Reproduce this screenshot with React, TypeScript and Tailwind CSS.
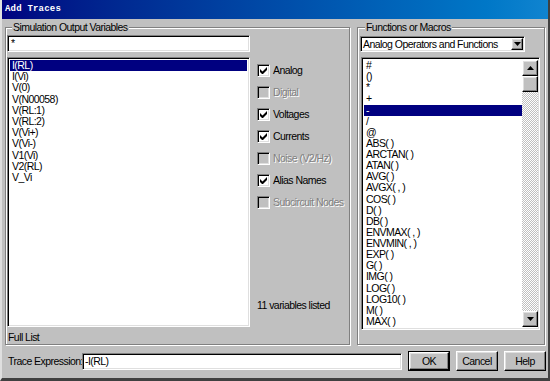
import React from "react";

const VARS = ["I(RL)", "I(Vi)", "V(0)", "V(N00058)", "V(RL:1)", "V(RL:2)", "V(Vi+)", "V(Vi-)", "V1(Vi)", "V2(RL)", "V_Vi"];

const FUNCS = [
  "#", "()", "*", "+", "-", "/", "@", "ABS( )", "ARCTAN( )", "ATAN( )", "AVG( )", "AVGX( , )", "COS( )",
  "D( )", "DB( )", "ENVMAX( , )", "ENVMIN( , )", "EXP( )", "G( )", "IMG( )", "LOG( )", "LOG10( )", "M( )", "MAX( )",
];

const OPTIONS = [
  { label: "Analog", checked: true, disabled: false },
  { label: "Digital", checked: false, disabled: true },
  { label: "Voltages", checked: true, disabled: false },
  { label: "Currents", checked: true, disabled: false },
  { label: "Noise (V2/Hz)", checked: false, disabled: true },
  { label: "Alias Names", checked: true, disabled: false },
  { label: "Subcircuit Nodes", checked: false, disabled: true },
];

// classic win32 bevels
const SUNKEN = "border border-t-[#808080] border-l-[#808080] border-b-white border-r-white shadow-[inset_1px_1px_0_#000,inset_-1px_-1px_0_#dfdfdf]";
const RAISED = "border border-t-white border-l-white border-b-black border-r-black shadow-[inset_-1px_-1px_0_#808080,inset_1px_1px_0_#dfdfdf]";
const ETCHED = "border border-[#808080] shadow-[1px_1px_0_#fff,inset_1px_1px_0_#fff]";

function Check({ checked, disabled }: { checked: boolean; disabled: boolean }) {
  return (
    <span className={`w-[13px] h-[13px] shrink-0 flex items-center justify-center ${SUNKEN} ${disabled ? "bg-[#c0c0c0]" : "bg-white"}`}>
      {checked && (
        <svg width="7" height="7" viewBox="0 0 7 7">
          <path d="M0 2v3l2 2h1l4-4V0L2.5 4.5z" fill="#000" />
        </svg>
      )}
    </span>
  );
}

function Arrow({ dir }: { dir: "up" | "down" }) {
  return (
    <svg width="7" height="4" viewBox="0 0 7 4">
      <path d={dir === "up" ? "M3.5 0L7 4H0z" : "M0 0h7L3.5 4z"} fill="#000" />
    </svg>
  );
}

export default function App() {
  return (
    <div className="w-[550px] h-[381px] bg-[#c0c0c0] text-black overflow-hidden flex flex-col border-l-2 border-l-[#dfdfdf] border-r-2 border-r-[#404040] border-b-[3px] border-b-[#404040] font-['Liberation_Sans',Arial,sans-serif] text-[10.5px] tracking-[-0.55px]">
      {/* title bar */}
      <div className="h-[19px] shrink-0 flex items-center pl-[3px] bg-gradient-to-r from-[#000080] to-[#1084d0]">
        <span className="text-white font-bold text-[9px] tracking-[0.2px] font-['Liberation_Mono','Courier_New',monospace]">
          Add Traces
        </span>
      </div>

      <div className="flex gap-[7px] pl-[3px] pt-[2px]">
        {/* left group */}
        <fieldset className={`w-[345px] h-[324px] pl-[1px] pr-[2px] pt-[1px] ${ETCHED}`}>
          <legend className="ml-[5px] px-[1px] leading-[13px] bg-[#c0c0c0]">Simulation Output Variables</legend>
          <div className="flex h-full">
            <div className="w-[243px] flex flex-col shrink-0">
              <div className={`h-[17px] bg-white pl-[3px] leading-[15px] ${SUNKEN}`}>*</div>
              <div className={`h-[273px] mt-[5px] bg-white p-[2px] ${SUNKEN}`}>
                {VARS.map((v, i) => (
                  <div key={v} className={`h-[11.2px] leading-[11.2px] pl-[2px] ${i === 0 ? "bg-[#000080] text-white" : ""}`}>{v}</div>
                ))}
              </div>
              <div className="leading-[13px] mt-[4px] pl-[1px]">Full List</div>
            </div>
            <div className="flex-1 flex flex-col pl-[7px] pt-[29px]">
              {OPTIONS.map((o) => (
                <div key={o.label} className="h-[22px] flex items-start gap-[3px]">
                  <Check checked={o.checked} disabled={o.disabled} />
                  <span className={`leading-[13px] whitespace-nowrap ${o.disabled ? "text-[#808080] [text-shadow:1px_1px_0_#fff]" : ""}`}>{o.label}</span>
                </div>
              ))}
              <div className="mt-auto mb-[32px] leading-[13px]">11 variables listed</div>
            </div>
          </div>
        </fieldset>

        {/* right group */}
        <fieldset className={`w-[188px] h-[324px] pl-[2px] pr-[4px] pt-[2px] ${ETCHED}`}>
          <legend className="ml-[5px] px-[1px] leading-[13px] bg-[#c0c0c0]">Functions or Macros</legend>
          <div className={`w-[165px] h-[16px] bg-white flex items-center justify-between pl-[2px] pr-[1px] ${SUNKEN}`}>
            <span className="leading-[13px] whitespace-nowrap">Analog Operators and Functions</span>
            <span className={`w-[12px] h-[12px] bg-[#c0c0c0] flex items-center justify-center ${RAISED}`}>
              <Arrow dir="down" />
            </span>
          </div>
          <div className={`h-[273px] mt-[5px] ml-[1px] bg-white flex p-[2px] pr-[1px] ${SUNKEN}`}>
            <div className="flex-1">
              {FUNCS.map((f, i) => (
                <div key={f} className={`h-[11.13px] leading-[11.13px] pl-[2px] whitespace-pre ${i === 4 ? "bg-[#000080] text-white" : ""}`}>{f}</div>
              ))}
            </div>
            <div className="w-[16px] flex flex-col bg-[repeating-conic-gradient(#c0c0c0_0%_25%,#fff_0%_50%)] bg-[length:2px_2px]">
              <div className={`h-[16px] bg-[#c0c0c0] flex items-center justify-center ${RAISED}`}><Arrow dir="up" /></div>
              <div className={`h-[16px] bg-[#c0c0c0] ${RAISED}`} />
              <div className="flex-1" />
              <div className={`h-[16px] bg-[#c0c0c0] flex items-center justify-center ${RAISED}`}><Arrow dir="down" /></div>
            </div>
          </div>
        </fieldset>
      </div>

      {/* bottom row */}
      <div className="flex items-center mt-[6px] pl-[6px]">
        <span className="leading-[13px] w-[74px] whitespace-nowrap">Trace Expression:</span>
        <div className={`w-[320px] h-[17px] bg-white pl-[2px] leading-[15px] ${SUNKEN}`}>-I(RL)</div>
        <div className="ml-[6px] border border-black">
          <button className={`w-[40px] h-[18px] bg-[#c0c0c0] leading-[13px] ${RAISED}`}>OK</button>
        </div>
        <button className={`ml-[6px] w-[42px] h-[20px] bg-[#c0c0c0] leading-[13px] ${RAISED}`}>Cancel</button>
        <button className={`ml-[6px] w-[42px] h-[20px] bg-[#c0c0c0] leading-[13px] ${RAISED}`}>Help</button>
      </div>
    </div>
  );
}
